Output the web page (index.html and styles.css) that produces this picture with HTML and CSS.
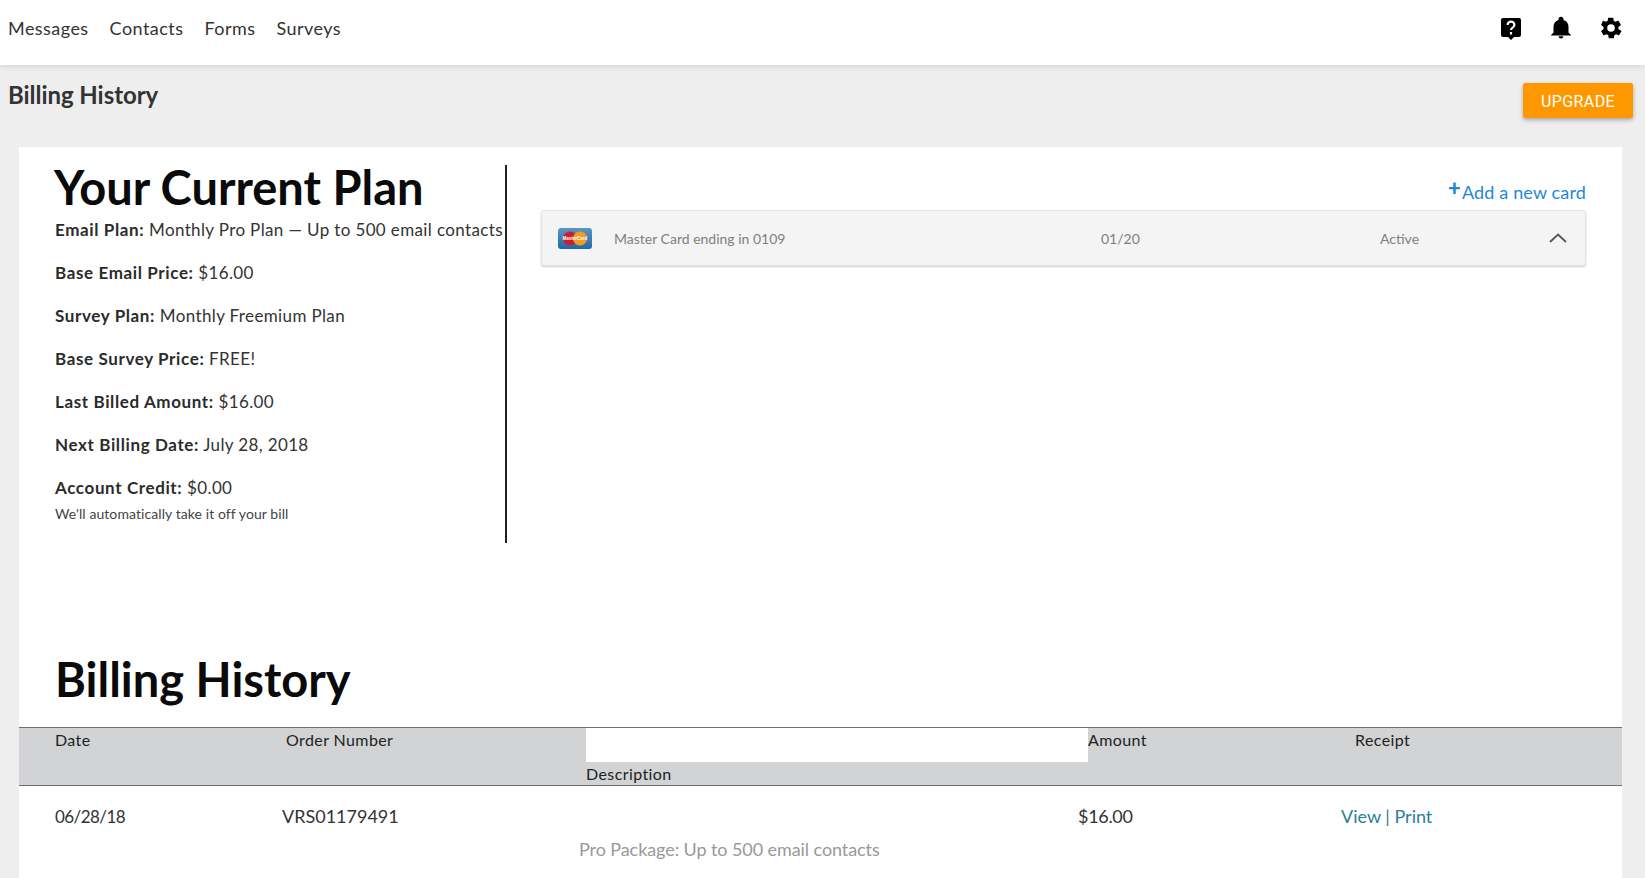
FILE: index.html
```html
<!DOCTYPE html>
<html>
<head>
  <link rel="stylesheet" href="styles.css">
</head>
<body>
  <div class="topbar">
    <div class="nav-links">
      <a>Messages</a>
      <a>Contacts</a>
      <a>Forms</a>
      <a>Surveys</a>
    </div>
    <div class="nav-icons">
      <svg viewBox="0 0 24 24" width="24" height="24"><path d="M4 2h16a2 2 0 0 1 2 2v15a2 2 0 0 1-2 2h-5l-3 3-3-3H4a2 2 0 0 1-2-2V4a2 2 0 0 1 2-2z"/><path d="M8.600 9a3.400 3.400 0 0 1 6.800 0c0 2.400-3.400 2.600-3.400 5M12 16v2.400" fill="none" stroke="#fff" stroke-width="2.200"/></svg>
      <svg viewBox="0 0 24 24" width="24" height="24"><path d="M12 22.500a2.400 2.400 0 0 0 2.400-2.300H9.600A2.400 2.400 0 0 0 12 22.500zM19.500 16.500V11c0-3.400-1.800-6.200-5-7V3.200a2.500 2.500 0 0 0-5 0V4c-3.200.8-5 3.600-5 7v5.500L2 19v.6h20V19z"/></svg>
      <svg viewBox="0 0 24 24" width="24" height="24"><path d="M19.400 13a7.700 7.700 0 0 0 0-2l2.200-1.700a.5.500 0 0 0 .1-.7l-2.100-3.600a.5.500 0 0 0-.6-.2l-2.600 1a7.500 7.500 0 0 0-1.700-1l-.4-2.700a.5.500 0 0 0-.5-.4H9.600a.5.500 0 0 0-.5.4l-.4 2.700a7.500 7.500 0 0 0-1.700 1l-2.600-1a.5.500 0 0 0-.6.200L2.300 8.600a.5.500 0 0 0 .1.700L4.600 11a7.700 7.700 0 0 0 0 2l-2.200 1.700a.5.500 0 0 0-.1.700l2.100 3.600a.5.500 0 0 0 .6.200l2.600-1a7.500 7.500 0 0 0 1.700 1l.4 2.700a.5.500 0 0 0 .5.400h4.200a.5.500 0 0 0 .5-.4l.4-2.700a7.500 7.500 0 0 0 1.700-1l2.600 1a.5.500 0 0 0 .6-.2l2.100-3.600a.5.500 0 0 0-.1-.7zM12 15.800a3.800 3.800 0 1 1 0-7.600 3.800 3.800 0 0 1 0 7.600z"/></svg>
    </div>
  </div>

  <div class="page-head">
    <div class="page-title">Billing History</div>
    <button class="upgrade-btn">UPGRADE</button>
  </div>

  <div class="content-card">
    <div class="plan-section">
      <div class="plan-info">
        <h1 class="plan-heading">Your Current Plan</h1>
        <p class="plan-line first"><b>Email Plan:</b> Monthly Pro Plan — Up to 500 email contacts</p>
        <p class="plan-line"><b>Base Email Price:</b> $16.00</p>
        <p class="plan-line"><b>Survey Plan:</b> Monthly Freemium Plan</p>
        <p class="plan-line"><b>Base Survey Price:</b> FREE!</p>
        <p class="plan-line"><b>Last Billed Amount:</b> $16.00</p>
        <p class="plan-line"><b>Next Billing Date:</b> July 28, 2018</p>
        <p class="plan-line"><b>Account Credit:</b> $0.00</p>
        <p class="plan-note">We'll automatically take it off your bill</p>
      </div>
      <div class="cards-col">
        <div class="add-card"><span class="plus">+</span>Add a new card</div>
        <div class="card-row">
          <svg class="card-logo" viewBox="0 0 34 21" width="34" height="21">
            <defs><linearGradient id="cardBg" x1="0" y1="0" x2="0" y2="1"><stop offset="0" stop-color="#5b95c2"/><stop offset="1" stop-color="#1e6ba5"/></linearGradient></defs>
            <rect width="34" height="21" rx="3" fill="url(#cardBg)"/>
            <circle cx="12" cy="10.500" r="7" fill="#c8202f"/>
            <circle cx="22" cy="10.500" r="7" fill="#f39c25"/>
            <text class="card-logo-text" x="17" y="12" text-anchor="middle">MasterCard</text>
          </svg>
          <span class="card-name">Master Card ending in 0109</span>
          <span class="card-exp">01/20</span>
          <span class="card-status">Active</span>
          <svg class="chevron" viewBox="0 0 18 10" width="18" height="10"><path d="M1 9l8-7.500L17 9" fill="none" stroke="#555" stroke-width="1.800"/></svg>
        </div>
      </div>
    </div>

    <h1 class="history-heading">Billing History</h1>
    <div class="history-head">
      <div class="hcol">Date</div>
      <div class="hcol hcol-order">Order Number</div>
      <div class="hcol-desc"><div class="desc-blank"></div><div>Description</div></div>
      <div class="hcol">Amount</div>
      <div class="hcol">Receipt</div>
    </div>
    <div class="history-row">
      <div class="row-date">06/28/18</div>
      <div>VRS01179491</div>
      <div class="row-desc">Pro Package: Up to 500 email contacts</div>
      <div class="row-amount">$16.00</div>
      <div class="row-links"><a>View</a> | <a>Print</a></div>
    </div>
  </div>
</body>
</html>
```

FILE: styles.css
```css
html, body {
  height: 878px;
  overflow: hidden;
}
body {
  margin: 0;
  background-color: #eeeeee;
  font-family: "Lato", "Open Sans", sans-serif;
  color: #2b2b2b;
}
.topbar {
  height: 65px;
  background-color: #ffffff;
  box-shadow: 0 1px 6px rgba(0, 0, 0, 0.12);
  display: flex;
  justify-content: space-between;
  align-items: center;
  padding: 0 8px;
  position: relative;
}
.nav-links {
  display: flex;
  gap: 21px;
  font-size: 18px;
  letter-spacing: 0.45px;
  margin-top: -10px;
  color: #333;
}
.nav-icons {
  display: flex;
  gap: 26px;
  margin-right: 14px;
  margin-top: -9px;
}
.page-head {
  height: 82px;
  display: flex;
  justify-content: space-between;
  align-items: flex-start;
  padding: 0 12px 0 8px;
}
.page-title {
  font-size: 24px;
  font-weight: 700;
  color: #333;
  margin-top: 15px;
  letter-spacing: -0.05px;
}
.upgrade-btn {
  margin-top: 18px;
  width: 110px;
  height: 35px;
  padding: 2px 0 0;
  background-color: #ff9800;
  color: #fff;
  border: none;
  border-radius: 2px;
  font-family: "Roboto", sans-serif;
  font-size: 16px;
  letter-spacing: 0.4px;
  box-shadow: 0 2px 4px rgba(0, 0, 0, 0.3);
}
.content-card {
  margin: 0 23px 0 19px;
  background-color: #ffffff;
  height: 731px;
  padding-top: 18px;
}
.plan-section {
  display: flex;
  height: 378px;
}
.plan-info {
  padding-left: 36px;
  border-right: 2px solid #222;
  width: 450px;
}
.plan-heading {
  margin: -4px 0 0 -1px;
  font-size: 47px;
  font-weight: 700;
  line-height: 52px;
  color: #0a0a0a;
}
.plan-line {
  margin: 23px 0 0;
  font-size: 17px;
  line-height: 20px;
  letter-spacing: 0.37px;
  white-space: nowrap;
  color: #333;
}
.plan-line b {
  font-weight: 700;
  letter-spacing: 0.62px;
  color: #2b2b2b;
}
.plan-line.first {
  margin-top: 7px;
}
.plan-note {
  margin: 8px 0 0;
  font-size: 14px;
  line-height: 16px;
  letter-spacing: 0.08px;
  color: #444;
}
.cards-col {
  flex: 1;
  padding: 0 36px 0 34px;
}
.add-card {
  margin-top: 11px;
  text-align: right;
  font-size: 18px;
  line-height: 24px;
  color: #1e88d6;
  letter-spacing: 0.15px;
}
.plus {
  font-weight: 900;
  font-size: 22px;
  vertical-align: 3px;
  margin-right: 1px;
}
.card-row {
  margin-top: 6px;
  height: 56px;
  background-color: #f4f4f4;
  border: 1px solid #e4e4e4;
  border-radius: 3px;
  box-shadow: 0 1px 2px rgba(0, 0, 0, 0.2);
  display: flex;
  align-items: center;
  font-size: 14px;
  color: #808080;
  box-sizing: border-box;
  padding-left: 16px;
}
.card-logo {
  flex: none;
}
.card-logo-text {
  font-family: "Liberation Sans", sans-serif;
  font-size: 4.500px;
  font-weight: 700;
  fill: #fff;
}
.card-name {
  margin-left: 22px;
  width: 487px;
}
.card-exp {
  width: 279px;
}
.card-status {
  width: 169px;
}
.chevron {
  flex: none;
}
.history-heading {
  margin: 110px 0 0 36px;
  font-size: 47px;
  font-weight: 700;
  line-height: 52px;
  color: #0a0a0a;
}
.history-head {
  margin-top: 22px;
  height: 59px;
  box-sizing: border-box;
  background-color: #d1d3d4;
  border-top: 1px solid #6d6e70;
  border-bottom: 1px solid #6d6e70;
  display: grid;
  grid-template-columns: 266px 301px 502px 267px 1fr;
  font-size: 16px;
  color: #222;
  letter-spacing: 0.4px;
}
.hcol {
  line-height: 24px;
}
.hcol:first-child {
  padding-left: 36px;
  box-sizing: border-box;
  width: 266px;
}
.hcol-order {
  padding-left: 1px;
}
.desc-blank {
  height: 34px;
  background-color: #ffffff;
}
.hcol-desc div:last-child {
  line-height: 24px;
}
.history-row {
  display: grid;
  grid-template-columns: 263px 297px 499px 263px 1fr;
  font-size: 18px;
  line-height: 22px;
  padding-top: 19px;
  color: #333;
}
.history-row > div:first-child {
  padding-left: 36px;
}
.row-date {
  font-size: 17px;
  letter-spacing: -0.55px;
  margin-top: 1px;
}
.row-amount {
  letter-spacing: -0.3px;
}
.row-desc {
  color: #999;
  margin-top: 33px;
  line-height: 22px;
  letter-spacing: -0.08px;
}
.row-links {
  color: #2a7f95;
}
```
